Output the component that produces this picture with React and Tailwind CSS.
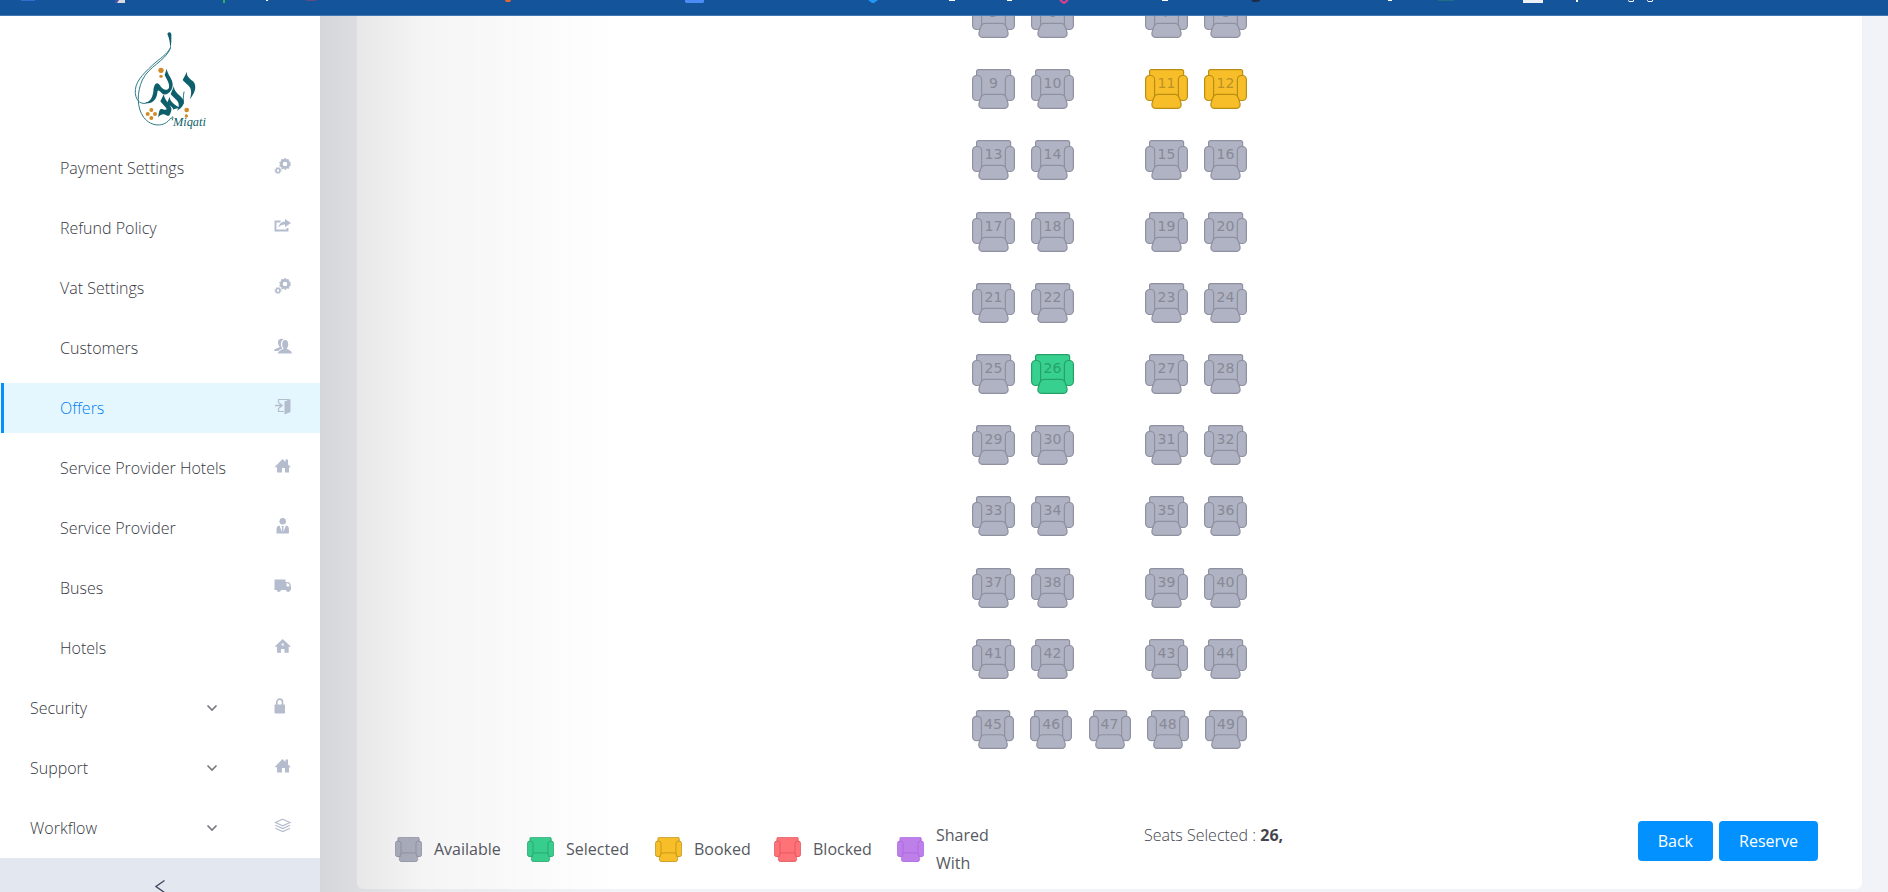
import React, { useState } from "react";

const SEAT_COLORS = {
  available: { fill: "#b0b3c3", stroke: "#8f90a0", text: "text-[#888996]" },
  selected: { fill: "#38d08f", stroke: "#26a269", text: "text-[#26a269]" },
  booked: { fill: "#f7be2a", stroke: "#ba8e12", text: "text-[#bb9224]" },
  blocked: { fill: "#ff7277", stroke: "#dc5258", text: "text-[#dc5258]" },
  shared: { fill: "#bd80e8", stroke: "#ac60e6", text: "text-[#ac60e6]" },
};

function SeatShape({ status, className }) {
  const c = SEAT_COLORS[status];
  return (
    <svg viewBox="0 0 43 40" preserveAspectRatio="none" className={className} fill={c.fill} stroke={c.stroke} strokeWidth="1.2" aria-hidden="true">
      <path d="M4.600 31V2.600q0-2 2-2h30q2 0 2 2V31z" />
      <rect x=".6" y="6.500" width="9" height="25" rx="4" />
      <rect x="33.400" y="6.500" width="9" height="25" rx="4" />
      <path d="M13 25.400h17c3 0 3.500 1.500 4.500 4l1.500 5c.5 3-1 5-3.500 5h-22c-2.500 0-4-2-3.500-5l1.500-5c1-2.500 1.500-4 4.500-4z" />
    </svg>
  );
}

function Seat({ number, status, small, onToggle }) {
  const c = SEAT_COLORS[status];
  return (
    <button
      type="button"
      onClick={() => onToggle(number)}
      className={`relative block cursor-pointer ${small ? "h-[39px] w-[42px]" : "h-10 w-[43px]"}`}
    >
      <SeatShape status={status} className="block h-full w-full" />
      <span className={`absolute inset-x-0 top-1 text-center font-['DejaVu_Sans',sans-serif] text-sm leading-5 font-normal ${c.text}`}>{number}</span>
    </button>
  );
}

const icons = {
  gears: (
    <>
      <circle cx="11" cy="6" r="3.700" fill="none" stroke="currentColor" strokeWidth="2.800" />
      <circle cx="11" cy="6" r="5.200" fill="none" stroke="currentColor" strokeWidth="1.200" strokeDasharray="2 1.267" />
      <circle cx="4" cy="12.500" r="2" fill="none" stroke="currentColor" strokeWidth="1.600" />
      <circle cx="4" cy="12.500" r="3" fill="none" stroke="currentColor" strokeWidth="1" strokeDasharray="1.200 1.156" />
    </>
  ),
  share: (
    <>
      <path d="M6.500 3.500H1.500v9h12V10" fill="none" stroke="currentColor" strokeWidth="1.900" />
      <path d="M11 1l6 4-6 4V6.600C8 6.600 6 7.500 4.500 10 5 6 7.500 3.700 11 3.500z" />
    </>
  ),
  people: (
    <>
      <path d="M9.500 1.200C7 0 3.800 1 4 4.500c.1 2 .8 3.500 1.800 4.300C5.500 10 0 10.500 0 13h4.500c.5-1.500 3-2 4-2.500C6.500 8 6 3.500 9.500 1.200z" />
      <ellipse cx="11.200" cy="6.200" rx="3" ry="4.300" />
      <path d="M9.500 9h3.400v2c1.500.8 5 1.500 5 4.500H4c0-3 4-3.700 5.500-4.500z" />
    </>
  ),
  door: (
    <>
      <path d="M4.500 5V1.500H15M4.500 10v3.500H10" fill="none" stroke="currentColor" strokeWidth="1.200" />
      <path d="M10.500 3.500L16.500 1v13l-6 2.500z" />
      <path d="M1 7.500h6M5 5l3 2.500L5 10" fill="none" stroke="currentColor" strokeWidth="1.500" />
    </>
  ),
  house: <path d="M.5 9.200L8.500 1l3 3V1.500H14v5l3 2.700h-2V14.500h-4V10H8v4.500H3V9.200z" />,
  home: <path fillRule="evenodd" d="M.5 8.700L8.700 1 17 8.700h-2.300v6H10.500V11H7v3.700H3v-6zM7.700 5.500v2h2v-2z" />,
  agent: (
    <>
      <circle cx="8.700" cy="3.300" r="3.200" />
      <path d="M5.500 7.500L8 14V9l-.7-1h2.800L9.400 9v5l2.500-6.500c2 .3 3 1.500 3 3.500v4.500H2.500V11c0-2 1-3.200 3-3.500z" />
    </>
  ),
  truck: (
    <path fillRule="evenodd" d="M.5 1.500H11.500V4h2.500c1.500 0 3 2.500 3 4.500V12h-.7v.3a2.200 2.200 0 0 1-4.300 0V12H7v.3a2.200 2.200 0 0 1-4.300 0V12H.5zM12.500 5.200v3.300h3c0-1.500-.8-3.300-1.800-3.300z" />
  ),
  lock: (
    <>
      <path d="M2.800 7V4a2.800 2.800 0 0 1 5.700 0V7" fill="none" stroke="currentColor" strokeWidth="1.700" />
      <rect x=".5" y="6.500" width="10.500" height="9" rx=".7" />
    </>
  ),
  layers: (
    <g fill="none" stroke="currentColor" strokeWidth="1.200">
      <path d="M8.700 1.200l7.300 3.300-7.300 3.300-7.300-3.300z" />
      <path d="M1.400 7.300l7.300 3.300L16 7.300M1.400 10.300l7.300 3.300 7.300-3.300" />
    </g>
  ),
};

const MENU = [
  { label: "Payment Settings", icon: "gears" },
  { label: "Refund Policy", icon: "share" },
  { label: "Vat Settings", icon: "gears" },
  { label: "Customers", icon: "people" },
  { label: "Offers", icon: "door", active: true },
  { label: "Service Provider Hotels", icon: "house" },
  { label: "Service Provider", icon: "agent" },
  { label: "Buses", icon: "truck" },
  { label: "Hotels", icon: "home" },
  { label: "Security", icon: "lock", group: true },
  { label: "Support", icon: "house", group: true },
  { label: "Workflow", icon: "layers", group: true },
];

function Logo() {
  return (
    <svg viewBox="70 30 225 309" className="h-[103px] w-[75px]" role="img" aria-label="Miqati">
      <g fill="none" stroke="#2c7c85" strokeLinecap="round">
        <path d="M183 82C172 105 150 115 128 136C98 164 74 188 77 220C80 246 95 254 112 249" strokeWidth="3" />
        <path d="M182 86C165 125 118 138 98 180C82 215 80 262 102 292C125 322 165 322 182 296" strokeWidth="3" />
        <path d="M223 216C220 230 221 240 221 250M184 296c6-10 8-6 4 4" strokeWidth="3" />
      </g>
      <g fill="#0d5f6b">
        <path d="M173 42c3-8 11-7 12 1 0 14 1 28-3 42-1-12-1-24-9-43z" />
        <path d="M171 146L165 165C172 180 180 190 178 203C172 214 160 210 152 198C143 182 132 190 131 215C128 235 120 246 106 248C125 254 141 240 143 218C144 206 150 214 158 221C172 230 190 212 189 192C188 175 174 165 171 146z" />
        <path d="M232 155L219 180C227 190 240 197 243 207C246 218 244 228 240 238C254 222 263 200 252 186C246 178 229 172 232 155z" />
        <path d="M193 198L183 222C192 235 206 241 207 252C208 262 206 266 202 272C218 262 228 250 219 236C212 226 191 215 193 198z" />
        <path d="M163 222L152 244C160 255 170 262 171 268C166 272 156 264 152 268C146 274 148 284 145 292C154 284 160 280 170 286C180 292 182 280 185 272C190 258 161 240 163 222z" />
        <path d="M180 230L172 250C180 258 190 262 192 270C194 264 206 268 210 262C200 258 180 246 180 230z" />
      </g>
      <g fill="#d08a26">
        <circle cx="154" cy="151" r="8" />
        <circle cx="154" cy="169" r="5" />
        <circle cx="125" cy="270" r="6" />
        <circle cx="114" cy="282" r="6" />
        <circle cx="136" cy="282" r="6" />
        <circle cx="125" cy="294" r="6" />
        <circle cx="231" cy="270" r="7" />
        <circle cx="230" cy="288" r="5" />
      </g>
      <text x="190" y="317" fontFamily="Liberation Serif, serif" fontStyle="italic" fontWeight="400" fontSize="37" fill="#0d5f6b">Miqati</text>
    </svg>
  );
}

function TopBar() {
  return (
    <header className="relative z-10 h-4 shrink-0 overflow-hidden border-b border-[#4377b4] bg-[#14549a]">
      <svg width="1888" height="4" className="block" aria-hidden="true">
        <path d="M21 0h14v1H21z" fill="#2f6fd0" />
        <path d="M116 0h9v3h-9z" fill="#d8dade" />
        <path d="M115 0h4l-2 3h-2z" fill="#4a50a8" />
        <path d="M223 0h2v3h-2z" fill="#2fae62" />
        <path d="M266 0h2v1h-2zM949 0h6v1h-6zM1007 0h5v1h-5zM1162 0h6v1h-6zM1388 0h4v1h-4zM1576 0h2v2h-2zM1628 0h1v1h4V0h1v1l-1 1h-4zM1647 0h1v1h4V0h1v1l-1 1h-4z" fill="#fff" />
        <path d="M304 0h14l-4 1h-6z" fill="#65497f" />
        <path d="M505 0h6l-1 2h-4z" fill="#e8662c" />
        <path d="M685 0h19v2l-1 1h-17l-1-1z" fill="#4a8bf6" />
        <path d="M868 0h10l-4 3h-2z" fill="#2196f3" />
        <path d="M1060 0l4 3 4-3" fill="none" stroke="#e83e8c" strokeWidth="2" />
        <path d="M1251 0h9v1l-3 1h-4z" fill="#1c2c42" />
        <path d="M1438 0h16v1h-16z" fill="#1f6d86" />
        <path d="M1523 0h20v3h-20z" fill="#edf0f4" />
      </svg>
    </header>
  );
}

function Sidebar() {
  return (
    <aside className="flex w-80 shrink-0 flex-col bg-white">
      <div className="flex h-[122px] shrink-0 items-center justify-center pl-5 pt-2">
        <Logo />
      </div>
      <nav className="flex flex-col">
        {MENU.map((item) => (
          <a
            key={item.label}
            href="#"
            className={`my-[5px] ml-px flex h-[50px] items-center border-l-[3px] pr-7 ${item.group ? "pl-[26px]" : "pl-14"} ${
              item.active ? "border-[#0391ff] bg-[#e4f7ff] text-[#007df0]" : "border-transparent text-[#37383f]"
            }`}
          >
            <span className="flex-1">{item.label}</span>
            {item.group && (
              <svg viewBox="0 0 12 12" className="mr-14 h-3 w-3 text-[#77787f]" fill="none" stroke="currentColor" strokeWidth="1.6" aria-hidden="true">
                <path d="M1.500 3.500L6 8l4.500-4.500" />
              </svg>
            )}
            <svg viewBox="0 0 18 18" className="mb-0.5 h-[18px] w-[18px] text-[#b4bccd]" fill="currentColor" aria-hidden="true">
              {icons[item.icon]}
            </svg>
          </a>
        ))}
      </nav>
      <button type="button" aria-label="Collapse menu" className="flex min-h-[34px] flex-1 justify-center bg-[#e2e7f0] pt-5 text-[#4a4b63]">
        <svg viewBox="0 0 12 16" className="h-4 w-3 shrink-0" fill="none" stroke="currentColor" strokeWidth="1.5" aria-hidden="true">
          <path d="M10.500 2.500L2 8.500l8.500 6" />
        </svg>
      </button>
    </aside>
  );
}

const ROWS = Array.from({ length: 10 }, (_, i) => [0, 1, 2, 3].map((n) => 5 + i * 4 + n));
const LAST_ROW = [45, 46, 47, 48, 49];
const BOOKED = [11, 12];

const LEGEND = [
  { label: "Available", status: "available", width: "w-[132px]" },
  { label: "Selected", status: "selected", width: "w-32" },
  { label: "Booked", status: "booked", width: "w-[119px]" },
  { label: "Blocked", status: "blocked", width: "w-[123px]" },
  { label: "Shared With", status: "shared", width: "w-[104px]" },
];

export default function App() {
  const [selected, setSelected] = useState([26]);
  const statusOf = (n) => (BOOKED.includes(n) ? "booked" : selected.includes(n) ? "selected" : "available");
  const toggle = (n) => {
    if (BOOKED.includes(n)) return;
    setSelected((s) => (s.includes(n) ? s.filter((x) => x !== n) : [...s, n]));
  };
  const seat = (n, small) => <Seat key={n} number={n} small={small} status={statusOf(n)} onToggle={toggle} />;

  return (
    <div className="flex h-screen flex-col overflow-hidden bg-[#f2f3f8] font-['Open_Sans',sans-serif] text-base font-light">
      <TopBar />
      <div className="flex min-h-0 flex-1">
        <Sidebar />
        <main className="relative min-w-0 flex-1 pr-[26px] pl-[37px]">
          <section className="flex flex-col rounded-b-md bg-white">
            <div className="-mt-[18px] ml-[615px] flex h-[751px] w-[275px] flex-col justify-between">
              {ROWS.map(([a, b, c, d]) => (
                <div key={a} className="flex justify-between">
                  <div className="flex gap-4">{seat(a)}{seat(b)}</div>
                  <div className="flex gap-4">{seat(c)}{seat(d)}</div>
                </div>
              ))}
              <div className="flex justify-between">{LAST_ROW.map((n) => seat(n, true))}</div>
            </div>
            <div className="mt-18 flex h-[68px] items-start pr-11 pl-[38px] text-[#575962]">
              <ul className="flex h-14 items-center font-normal">
                {LEGEND.map((l) => (
                  <li key={l.label} className={`flex shrink-0 items-center gap-3 leading-7 ${l.width}`}>
                    <SeatShape status={l.status} className="h-[25px] w-[27px] shrink-0" />
                    {l.label}
                  </li>
                ))}
              </ul>
              <p className="ml-[143px] leading-7 text-[#44454e]">
                Seats Selected : <b className="font-bold">{selected.map((n) => `${n},`).join(" ")}</b>
              </p>
              <div className="ml-auto flex gap-1.5 text-white">
                <button type="button" className="h-10 cursor-pointer rounded bg-[#0391ff] px-5 font-normal">Back</button>
                <button type="button" className="h-10 cursor-pointer rounded bg-[#0391ff] px-5 font-normal">Reserve</button>
              </div>
            </div>
          </section>
          <div className="pointer-events-none absolute inset-y-0 left-0 w-[300px] bg-linear-to-r from-black/12 via-black/4 via-35% to-transparent" />
        </main>
      </div>
    </div>
  );
}
